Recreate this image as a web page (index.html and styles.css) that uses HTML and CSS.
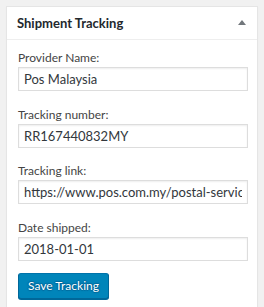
FILE: index.html
```html
<!DOCTYPE html>
<html lang="en">
<head>
  <meta charset="UTF-8" />
  <title>Shipment Tracking</title>
  <link rel="stylesheet" href="styles.css">
</head>
<body>
  <div class="postbox">
    <div class="postbox-header">
      <h2>Shipment Tracking</h2>
      <span class="toggle-arrow"></span>
    </div>
    <div class="inside">
      <p class="field">
        <label for="provider">Provider Name:</label>
        <input type="text" id="provider" value="Pos Malaysia" />
      </p>
      <p class="field">
        <label for="number">Tracking number:</label>
        <input type="text" id="number" value="RR167440832MY" />
      </p>
      <p class="field">
        <label for="link">Tracking link:</label>
        <input type="text" id="link" value="https://www.pos.com.my/postal-services/quick-access/?track-trace" />
      </p>
      <p class="field">
        <label for="shipped">Date shipped:</label>
        <input type="text" id="shipped" value="2018-01-01" />
      </p>
      <button type="button" class="button-primary">Save Tracking</button>
    </div>
  </div>
</body>
</html>
```

FILE: styles.css
```css
* {
  margin: 0;
  padding: 0;
  box-sizing: border-box;
}
body {
  font-family: Lato, 'Open Sans', sans-serif;
  font-size: 12px;
  color: #23282d;
  background: #f1f1f1;
  padding: 6px 6px 0 6px;
  height: 307px;
  overflow: hidden;
}

/* Meta box */
.postbox {
  width: 252px;
  background: #fff;
  border: 1px solid #e5e5e5;
  border-bottom: none;
  box-shadow: 0 1px 1px rgba(0,0,0,0.04);
  min-height: 301px;
}
.postbox-header {
  display: flex;
  align-items: center;
  justify-content: space-between;
  height: 33px;
  padding: 0 11px 0 10px;
  border-bottom: 1px solid #eee;
}
.postbox-header h2 {
  font-size: 13px;
  font-weight: 700;
  color: #23282d;
  line-height: 1.4;
}
.toggle-arrow {
  width: 0;
  height: 0;
  border-left: 4px solid transparent;
  border-right: 4px solid transparent;
  border-bottom: 5px solid #72777c;
  margin-top: -2px;
}

.inside {
  padding: 8px 9px 12px 11px;
}
.field {
  display: flex;
  flex-direction: column;
  margin-bottom: 13.67px;
}
.field label {
  line-height: 19px;
  color: #444;
}
.field input {
  width: 230px;
  height: 24px;
  padding: 0 5px;
  border: 1px solid #ddd;
  box-shadow: inset 0 1px 2px rgba(0,0,0,0.07);
  font-family: inherit;
  font-size: 13px;
  color: #32373c;
  background: #fff;
}

.button-primary {
  height: 26px;
  padding: 0 9px;
  margin-top: -2px;
  background: #0085ba;
  border: 1px solid #0073aa;
  border-color: #0073aa #006799 #006799;
  border-radius: 3px;
  box-shadow: 0 1px 0 #006799;
  color: #fff;
  font-family: inherit;
  font-size: 12px;
  text-shadow: 0 -1px 1px #006799, 1px 0 1px #006799, 0 1px 1px #006799, -1px 0 1px #006799;
  cursor: pointer;
}
```
